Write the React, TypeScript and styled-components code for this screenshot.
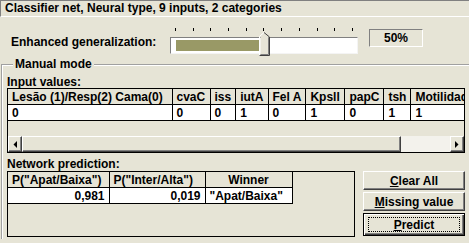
import styled, { createGlobalStyle, css } from "styled-components"

const GlobalStyle = createGlobalStyle`
  html, body {
    margin: 0;
    padding: 0;
    background: #e6e4d6;
  }
  body {
    font-family: "Liberation Sans", Arial, sans-serif;
  }
`

const BG = "#e6e4d6"

type Column = { name: string; width: number; value: string }

const inputs: Column[] = [
  { name: "Lesão (1)/Resp(2) Cama(0)", width: 164, value: "0" },
  { name: "cvaC", width: 38, value: "0" },
  { name: "iss", width: 23, value: "0" },
  { name: "iutA", width: 31, value: "1" },
  { name: "Fel A", width: 37, value: "0" },
  { name: "Kpsll", width: 39, value: "1" },
  { name: "papC", width: 38, value: "0" },
  { name: "tsh", width: 25, value: "1" },
  { name: "Motilidade", width: 80, value: "1" },
]

const generalization = 50

export default function App() {
  const ticks = Array.from({ length: 11 })
  // thumb sits over the track, its place comes from the value
  const thumbLeft = Math.round((generalization / 100) * 178)
  return (
    <Window>
      <GlobalStyle />
      <TitleBar>Classifier net, Neural type, 9 inputs, 2 categories</TitleBar>
      <SliderRow>
        <SliderLabel>Enhanced generalization:</SliderLabel>
        <Slider>
          <Ticks>
            {ticks.map((_, i) => (
              <Tick key={i} />
            ))}
          </Ticks>
          <Track>
            <Fill style={{ width: thumbLeft - 6 }} />
          </Track>
          <Thumb style={{ left: thumbLeft }} width="11" height="24" viewBox="0 0 11 24">
            <path d="M0.5 23.5 V4.5 L5 0.5" stroke="#fff" fill="none" />
            <path d="M5 0.5 L10.5 5 V23.5 H0.5" stroke="#404040" fill="none" />
            <path d="M1.5 22.5 V5 L5 1.7 L9.5 5.5 V22.5 Z" fill={BG} />
            <path d="M9.5 5.5 V22.5 H1.5" stroke="#808080" fill="none" />
          </Thumb>
        </Slider>
        <ValueBox>{generalization}%</ValueBox>
      </SliderRow>
      <GroupBox>
        <Legend>Manual mode</Legend>
        <SectionLabel $top={5}>Input values:</SectionLabel>
        <Grid>
          <Table>
            <colgroup>
              {inputs.map((c) => (
                <col key={c.name} style={{ width: c.width }} />
              ))}
            </colgroup>
            <thead>
              <tr>
                {inputs.map((c) => (
                  <HeadCell key={c.name}>{c.name}</HeadCell>
                ))}
              </tr>
            </thead>
            <tbody>
              <tr>
                {inputs.map((c) => (
                  <Cell key={c.name}>{c.value}</Cell>
                ))}
              </tr>
            </tbody>
          </Table>
          <Filler />
          <ScrollBar>
            <ArrowButton>
              <svg width="4" height="7" viewBox="0 0 4 7">
                <path d="M4 0 V7 L0.5 3.5 Z" fill="#000" />
              </svg>
            </ArrowButton>
            <ScrollThumb />
            <ScrollTrack />
            <ArrowButton>
              <svg width="4" height="7" viewBox="0 0 4 7">
                <path d="M0 0 V7 L3.5 3.5 Z" fill="#000" />
              </svg>
            </ArrowButton>
          </ScrollBar>
        </Grid>
        <SectionLabel $top={5}>Network prediction:</SectionLabel>
        <BottomRow>
          <Grid $width={346} $height={64}>
            <Table>
              <colgroup>
                <col style={{ width: 101 }} />
                <col style={{ width: 96 }} />
                <col style={{ width: 87 }} />
                <col />
              </colgroup>
              <thead>
                <tr>
                  <HeadCell>P("Apat/Baixa")</HeadCell>
                  <HeadCell>P("Inter/Alta")</HeadCell>
                  <HeadCell $center>Winner</HeadCell>
                  <EmptyCell />
                </tr>
              </thead>
              <tbody>
                <tr>
                  <Cell $right>0,981</Cell>
                  <Cell $right>0,019</Cell>
                  <Cell>"Apat/Baixa"</Cell>
                  <EmptyCell />
                </tr>
              </tbody>
            </Table>
          </Grid>
          <Buttons>
            <Button>
              <u>C</u>lear All
            </Button>
            <Button>
              <u>M</u>issing value
            </Button>
            <Button $default>
              <Focus>
                <u>P</u>redict
              </Focus>
            </Button>
          </Buttons>
        </BottomRow>
      </GroupBox>
    </Window>
  )
}

const Window = styled.div`
  width: 469px;
  height: 243px;
  overflow: hidden;
  display: flex;
  flex-direction: column;
  background: ${BG};
  color: #000;
  font-size: 12px;
  font-weight: bold;
`
const TitleBar = styled.div`
  height: 15px;
  line-height: 15px;
  padding-left: 4px;
  border-top: 1px solid #808080;
  border-left: 1px solid #808080;
  border-bottom: 1px solid #fff;
  white-space: nowrap;
`
const SliderRow = styled.div`
  display: flex;
  align-items: center;
  height: 33px;
  padding: 8px 0 0 11px;
`
const SliderLabel = styled.div`
  width: 159px;
`
const Slider = styled.div`
  position: relative;
  width: 188px;
  height: 28px;
  display: flex;
  flex-direction: column;
  gap: 6px;
`
const Ticks = styled.div`
  display: flex;
  justify-content: space-between;
  padding: 0 5px;
`
const Tick = styled.span`
  width: 1px;
  height: 3px;
  background: #000;
`
const Track = styled.div`
  height: 11px;
  padding: 2px 5px;
  background: #fff;
  border-top: 1px solid #808080;
  border-left: 1px solid #808080;
  border-bottom: 1px solid #f4f4f4;
  border-right: 1px solid #f4f4f4;
`
const Fill = styled.div`
  height: 100%;
  background: #999966;
`
const Thumb = styled.svg`
  position: absolute;
  top: 4px;
`
const ValueBox = styled.div`
  width: 52px;
  height: 16px;
  line-height: 16px;
  margin: 0 0 8px 11px;
  text-align: center;
  border-top: 1px solid #808080;
  border-left: 1px solid #808080;
  border-bottom: 1px solid #fff;
  border-right: 1px solid #fff;
`
const GroupBox = styled.fieldset`
  flex: 1;
  min-width: 0;
  margin: 0 0 4px 1px;
  padding: 0 0 0 5px;
  border: none;
  border-top: 1px solid #a0a0a0;
  border-left: 1px solid #a0a0a0;
  box-shadow: inset 1px 1px 0 #fff;
`
const Legend = styled.legend`
  margin-left: 6px;
  padding: 0 2px;
  background: ${BG};
  line-height: 13px;
`
const SectionLabel = styled.div<{ $top: number }>`
  margin-top: ${(p) => p.$top}px;
  height: 12px;
  line-height: 12px;
`
const Grid = styled.div<{ $width?: number; $height?: number }>`
  width: ${(p) => p.$width ?? 456}px;
  height: ${(p) => p.$height ?? 63}px;
  display: flex;
  flex-direction: column;
  overflow: hidden;
  border: 1px solid #000;
`
const Table = styled.table`
  border-collapse: collapse;
  table-layout: fixed;
  width: max-content;
`
const HeadCell = styled.th<{ $center?: boolean }>`
  height: 15px;
  padding: 0 4px;
  text-align: ${(p) => (p.$center ? "center" : "left")};
  white-space: nowrap;
  overflow: hidden;
  background: ${BG};
  border-right: 1px solid #000;
  border-bottom: 1px solid #000;
`
const Cell = styled.td<{ $right?: boolean }>`
  height: 15px;
  padding: 0 4px;
  text-align: ${(p) => (p.$right ? "right" : "left")};
  white-space: nowrap;
  overflow: hidden;
  background: #fff;
  border-right: 1px solid #000;
  border-bottom: 1px solid #000;
`
const EmptyCell = styled.td`
  width: 80px;
`
const Filler = styled.div`
  flex: 1;
`
const raised = css`
  border-top: 1px solid #fff;
  border-left: 1px solid #fff;
  border-right: 1px solid #404040;
  border-bottom: 1px solid #404040;
  box-shadow: inset -1px -1px 0 #808080;
`
const ScrollBar = styled.div`
  display: flex;
  height: 16px;
`
const ArrowButton = styled.div`
  width: 14px;
  box-sizing: border-box;
  display: flex;
  align-items: center;
  justify-content: center;
  background: ${BG};
  ${raised}
`
const ScrollThumb = styled.div`
  width: 379px;
  box-sizing: border-box;
  background: ${BG};
  ${raised}
`
const ScrollTrack = styled.div`
  flex: 1;
  background: #f3f2ec;
`
const BottomRow = styled.div`
  display: flex;
  align-items: flex-start;
  margin-top: 1px;
`
const Buttons = styled.div`
  display: flex;
  flex-direction: column;
  gap: 2px;
  margin-left: 8px;
`
const Button = styled.button<{ $default?: boolean }>`
  width: 102px;
  height: ${(p) => (p.$default ? 23 : 19)}px;
  padding: 0;
  display: flex;
  align-items: center;
  justify-content: center;
  font: bold 12px "Liberation Sans", Arial, sans-serif;
  color: #000;
  background: ${BG};
  ${raised}
  ${(p) =>
    p.$default &&
    css`
      border: 1px solid #000;
      box-shadow: inset 1px 1px 0 #fff, inset -1px -1px 0 #404040,
        inset -2px -2px 0 #808080;
    `}
`
const Focus = styled.span`
  width: 92px;
  height: 15px;
  line-height: 14px;
  border: 1px dotted #000;
  box-sizing: border-box;
`
